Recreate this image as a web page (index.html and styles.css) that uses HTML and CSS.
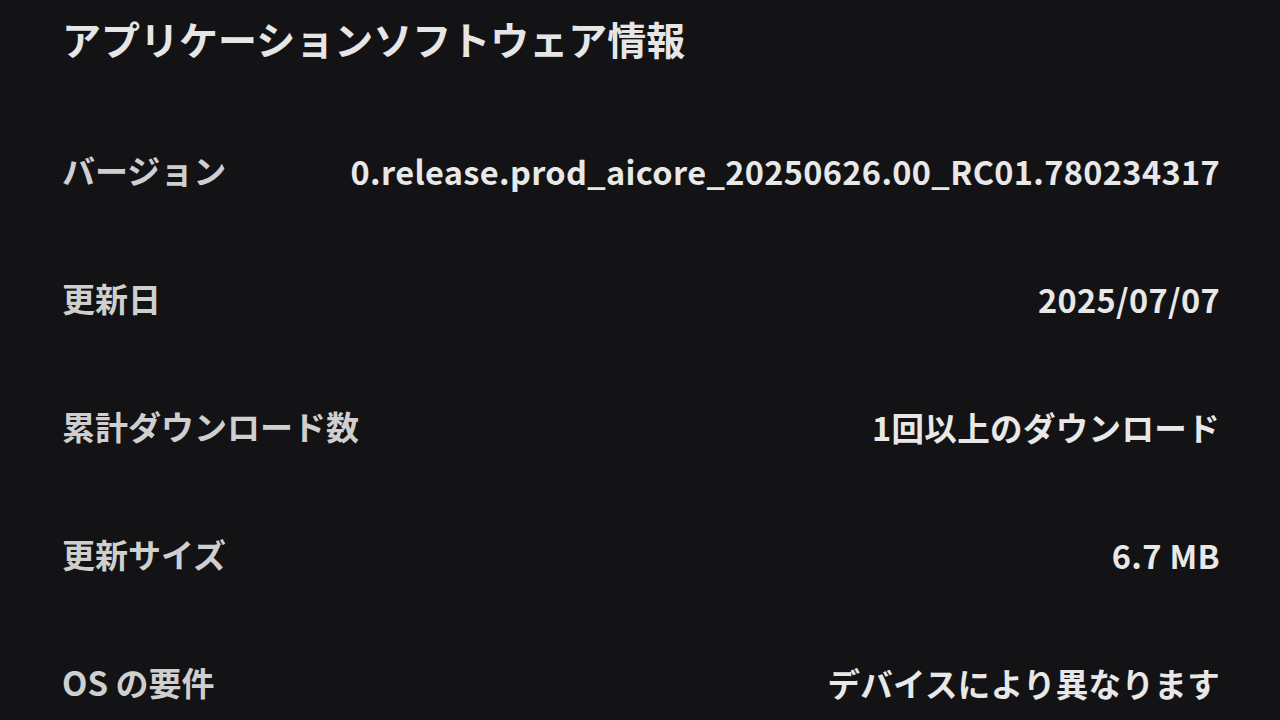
FILE: index.html
```html
<!DOCTYPE html>
<html lang="ja">
<head>
    <meta charset="UTF-8">
    <meta name="viewport" content="width=device-width, initial-scale=1.0">
    <title>アプリケーションソフトウェア情報</title>
    <link rel="stylesheet" href="styles.css">
</head>
<body>
    <h1>アプリケーションソフトウェア情報</h1>

    <div class="info-list">
        <div class="info-row">
            <span class="label">バージョン</span>
            <span class="value">0.release.prod_aicore_20250626.00_RC01.780234317</span>
        </div>
        <div class="info-row">
            <span class="label">更新日</span>
            <span class="value">2025/07/07</span>
        </div>
        <div class="info-row">
            <span class="label">累計ダウンロード数</span>
            <span class="value">1回以上のダウンロード</span>
        </div>
        <div class="info-row">
            <span class="label">更新サイズ</span>
            <span class="value">6.7 MB</span>
        </div>
        <div class="info-row">
            <span class="label">OS の要件</span>
            <span class="value">デバイスにより異なります</span>
        </div>
    </div>
</body>
</html>
```

FILE: styles.css
```css
html, body {
    background-color: #131315;
}
body {
    font-family: "Noto Sans CJK JP", "Noto Sans", sans-serif;
    margin: 0;
    padding: 0 60px 0 62px;
    height: 720px;
    overflow: hidden;
}
h1 {
    color: #e6e6e6;
    font-size: 39px;
    font-weight: 700;
    line-height: 48px;
    margin: 14px 0 0;
}
.info-list {
    margin-top: 44px;
}
.info-row {
    display: flex;
    justify-content: space-between;
    align-items: center;
    height: 128px;
    font-weight: 700;
}
.label {
    color: #cfcfcf;
    font-size: 33px;
}
.value {
    color: #e8e8e8;
    font-size: 32.5px;
    letter-spacing: 0.35px;
}
```
